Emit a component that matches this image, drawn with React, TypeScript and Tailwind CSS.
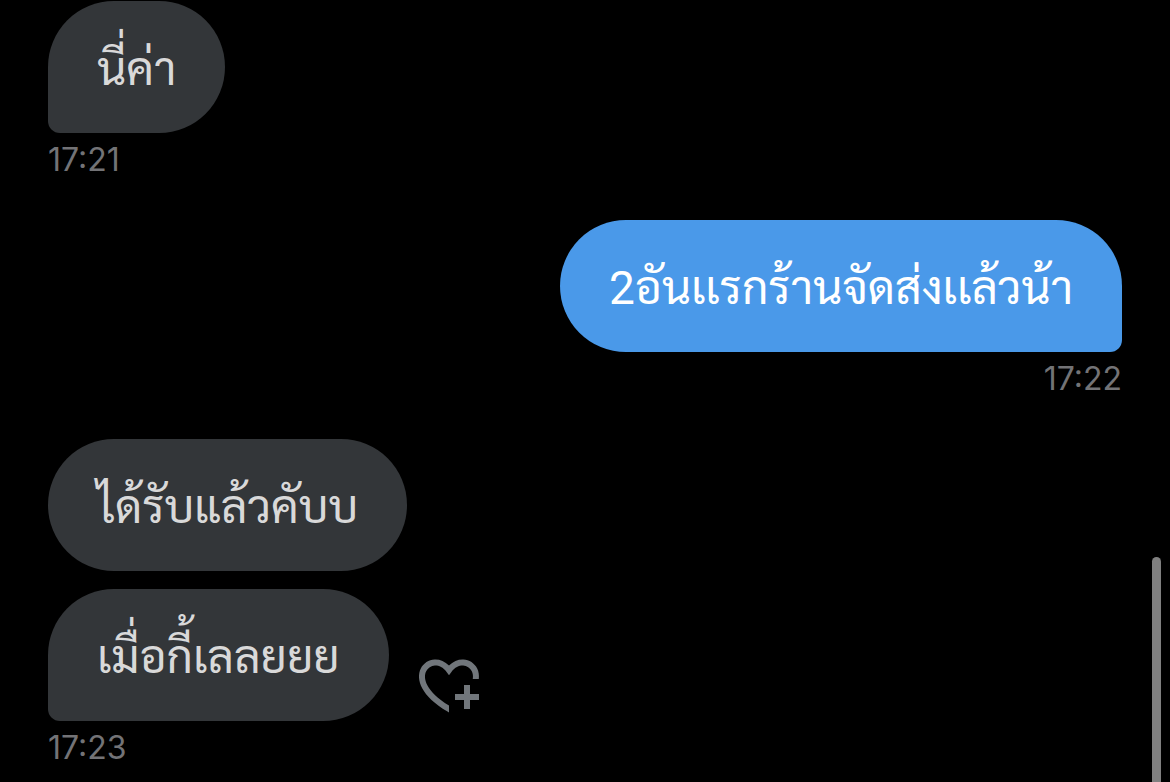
import React from 'react';
import { clsx } from 'clsx';

interface Message {
  id: number;
  text: string;
  mine?: boolean;
  canReact?: boolean;
}

interface MessageGroup {
  time: string;
  messages: Message[];
}

const groups: MessageGroup[] = [
  { time: '17:21', messages: [{ id: 1, text: 'นี่ค่า' }] },
  { time: '17:22', messages: [{ id: 2, text: '2อันเเรกร้านจัดส่งเเล้วน้า', mine: true }] },
  {
    time: '17:23',
    messages: [
      { id: 3, text: 'ได้รับแล้วคับบ' },
      { id: 4, text: 'เมื่อกี้เลลยยย', canReact: true },
    ],
  },
];

const HeartPlusIcon = () => (
  <svg viewBox="0 0 24 24" className="w-18 h-18" fill="currentColor" aria-hidden="true">
    <path d="M17 12v3h-2.998v2h3v3h2v-3h3v-2h-3.001v-3H17zm-5 6.839c-3.871-2.34-6.053-4.639-7.127-6.609-1.112-2.04-1.031-3.7-.479-4.82.561-1.13 1.667-1.84 2.91-1.91 1.222-.06 2.68.51 3.892 2.16l.806 1.09.805-1.09c1.211-1.65 2.668-2.22 3.89-2.16 1.242.07 2.347.78 2.908 1.91.334.677.49 1.554.321 2.59h2.011c.153-1.283-.039-2.469-.539-3.48-.887-1.79-2.647-2.91-4.601-3.01-1.65-.09-3.367.56-4.796 2.01-1.43-1.45-3.147-2.1-4.798-2.01-1.954.1-3.714 1.22-4.601 3.01-.896 1.81-.846 4.17.514 6.67 1.353 2.48 4.003 5.12 8.382 7.67l.502.299v-2.32z" />
  </svg>
);

const MessageRow: React.FC<{ message: Message; isLast: boolean }> = ({ message, isLast }) => (
  <div className={clsx('flex items-end gap-6', message.mine && 'justify-end')}>
    <p
      className={clsx(
        'rounded-[66px] px-[49px] pt-[38px] pb-[34px] text-[46px] leading-[60px]',
        message.mine ? 'bg-[#4a99e9] text-white' : 'bg-[#333639] text-[#d9d9d9]',
        isLast && (message.mine ? 'rounded-br-xl' : 'rounded-bl-xl')
      )}
    >
      {message.text}
    </p>
    {message.canReact && (
      <button type="button" aria-label="React" className="text-[#71767b]">
        <HeartPlusIcon />
      </button>
    )}
  </div>
);

const App: React.FC = () => {
  return (
    <main
      lang="th"
      className="relative min-h-screen overflow-hidden bg-black px-12 pt-px font-['Roboto','Sarabun','Noto_Sans_Thai_Looped',sans-serif]"
    >
      <div className="flex flex-col gap-[33px]">
        {groups.map((group) => (
          <section key={group.time}>
            <div className="flex flex-col gap-[18px]">
              {group.messages.map((message, i) => (
                <MessageRow key={message.id} message={message} isLast={i === group.messages.length - 1} />
              ))}
            </div>
            <time
              className={clsx(
                "block font-['Inter',sans-serif] text-[32px] leading-[54px] text-[#737376]",
                group.messages[0].mine && 'text-right'
              )}
            >
              {group.time}
            </time>
          </section>
        ))}
      </div>

      {/* Scroll thumb */}
      <div className="absolute right-[9px] top-[557px] bottom-0 w-[9px] rounded-t-full bg-[#808080]" />
    </main>
  );
};

export default App;
